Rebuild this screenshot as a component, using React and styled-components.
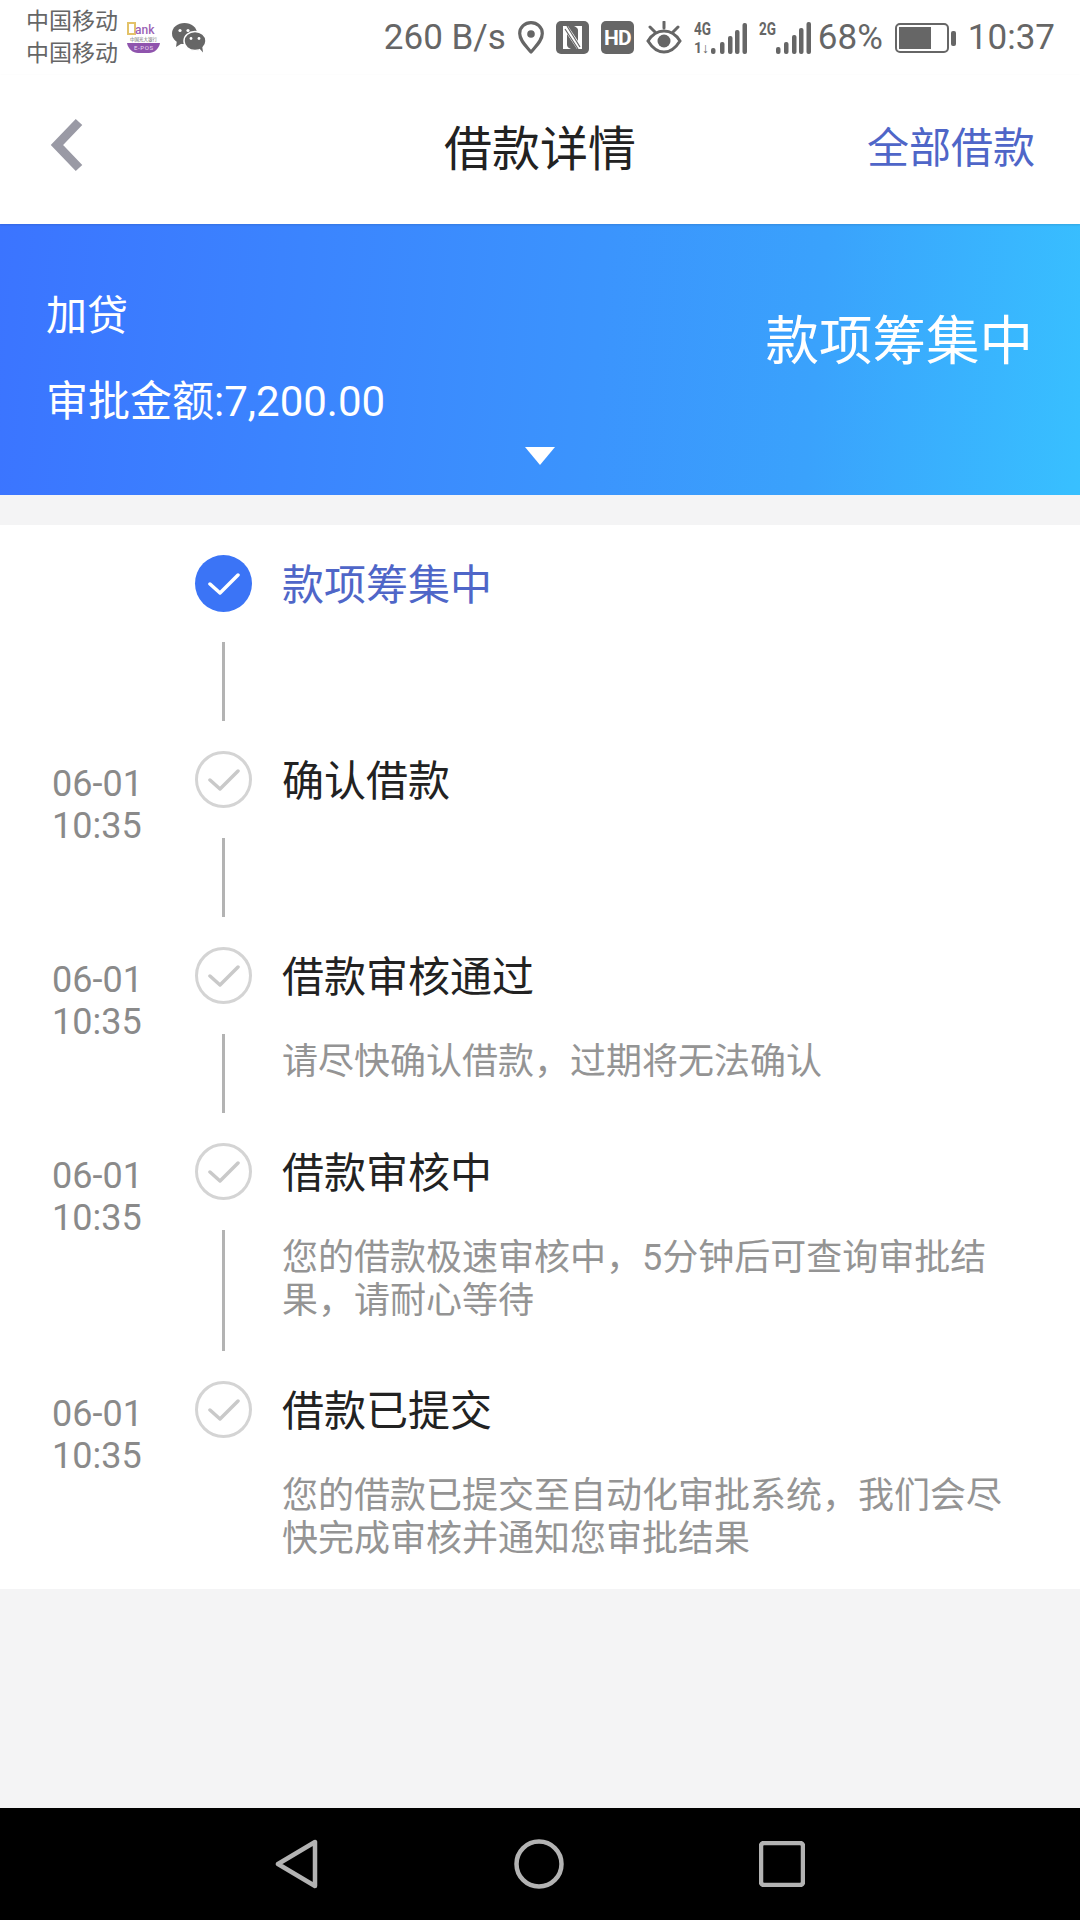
import React from "react";
import styled, {createGlobalStyle} from "styled-components";

const GlobalStyle = createGlobalStyle`
  html, body {
    margin: 0;
    padding: 0;
    background: #f4f4f5;
    font-family: Roboto, "Noto Sans CJK SC", sans-serif;
  }
  * {
    box-sizing: border-box;
  }
`

const Page = styled.div`
  display: flex;
  flex-direction: column;
  width: 1080px;
  height: 1920px;
  overflow: hidden;
`

const StatusBar = styled.div`
  display: flex;
  align-items: center;
  justify-content: space-between;
  height: 75px;
  padding: 0 25px 0 26px;
  background: #fff;
  color: #666;
`

const StatusLeft = styled.div`
  display: flex;
  align-items: center;
`

const Carriers = styled.div`
  font-size: 23px;
  line-height: 32px;
  width: 101px;
`

const StatusRight = styled.div`
  display: flex;
  align-items: center;
  gap: 12px;
`

const StatusText = styled.span`
  font-size: 35px;
  margin-left: ${props => props.$offset || 0}px;
  line-height: 40px;
`

const NavBar = styled.div`
  display: flex;
  align-items: center;
  justify-content: space-between;
  position: relative;
  height: 149px;
  padding: 0 45px 10px 49px;
  background: #fff;
  box-shadow: 0 1px 2px #00000020;
`

const NavTitle = styled.div`
  position: absolute;
  left: 0;
  right: 0;
  text-align: center;
  font-size: 48px;
  color: #222;
  pointer-events: none;
`

const NavLink = styled.div`
  font-size: 42px;
  color: #4f66c8;
`

const Banner = styled.div`
  display: flex;
  flex-direction: column;
  height: 271px;
  background: linear-gradient(95deg, #3b74ff 0%, #3b94fd 55%, #3aa2fc 75%, #38c0ff 100%);
  color: #fff;
`

const BannerMain = styled.div`
  display: flex;
  justify-content: space-between;
  align-items: center;
  height: 223px;
  padding: 46px 47px 0 46px;
`

const BannerInfo = styled.div`
  display: flex;
  flex-direction: column;
  gap: 34px;
`

const LoanType = styled.div`
  font-size: 41px;
  line-height: 52px;
`

const Amount = styled.div`
  font-size: 42px;
  line-height: 52px;
`

const BannerStatus = styled.div`
  font-size: 53.5px;
  margin-top: -44px;
`

const Caret = styled.div`
  align-self: center;
  width: 0;
  height: 0;
  border-left: 15px solid transparent;
  border-right: 15px solid transparent;
  border-top: 18px solid #fff;
`

const Timeline = styled.div`
  margin-top: 30px;
  padding: 30px 0 28px;
  background: #fff;
`

const Row = styled.div`
  display: grid;
  grid-template-columns: 195px 57px 1fr;
`

const Stamp = styled.div`
  padding: 12px 0 0 52px;
  font-size: 36px;
  line-height: 42px;
  color: #8a8a8a;
`

const Rail = styled.div`
  display: flex;
  flex-direction: column;
  align-items: center;
  gap: 30px;
  padding-bottom: ${props => props.$last ? 0 : 30}px;
`

const Dot = styled.div`
  display: flex;
  align-items: center;
  justify-content: center;
  width: 57px;
  height: 57px;
  border-radius: 50%;
  background: ${props => props.$active ? "#3b74f6" : "#fff"};
  border: ${props => props.$active ? "none" : "3px solid #d4d4d4"};
`

const RailLine = styled.div`
  width: 3px;
  height: ${props => props.$length}px;
  background: #b3b3b3;
`

const Body = styled.div`
  padding-left: 30px;
`

const StepTitle = styled.div`
  font-size: 42px;
  line-height: 57px;
  padding-top: 2px;
  color: ${props => props.$active ? "#4f66c8" : "#222"};
`

const StepNote = styled.div`
  width: 730px;
  margin-top: 35px;
  font-size: 36px;
  line-height: 43px;
  color: #949494;
`

const Spacer = styled.div`
  flex: 1;
  background: #f4f4f5;
`

const SoftKeys = styled.div`
  display: flex;
  align-items: center;
  justify-content: center;
  gap: 195px;
  height: 112px;
  background: #000;
`

const SignalSvg = styled.svg`
  margin-top: -6px;
`

const CheckIcon = ({color}) => (
    <svg width="32" height="26" viewBox="0 0 32 26">
        <path d="M2 13 L12 22 L30 4" fill="none" stroke={color} strokeWidth="3.5" strokeLinecap="round" strokeLinejoin="round"/>
    </svg>
)

const BankLogo = () => (
    <svg width="34" height="31" viewBox="0 0 34 31">
        <rect x="1" y="1" width="7" height="11" fill="none" stroke="#e3c268" strokeWidth="2"/>
        <text x="8" y="12" fontSize="12" fontWeight="500" fill="#9a62b5" fontFamily="Roboto">ank</text>
        <text x="3" y="19" fontSize="4.5" fill="#666" fontFamily="Noto Sans CJK SC">中国光大银行</text>
        <path d="M0 21 H33 C32 27 27 31 22 31 H11 C6 31 1 27 0 21 Z" fill="#8f54ad"/>
        <text x="7" y="27.5" fontSize="6" fill="#eadcf2" fontFamily="Roboto" letterSpacing="0.6">E-POS</text>
    </svg>
)

const WechatIcon = () => (
    <svg width="34" height="30" viewBox="0 0 34 30" style={{marginLeft: 11}}>
        <ellipse cx="12.5" cy="10.5" rx="12.5" ry="10.5" fill="#666"/>
        <path d="M5 17 L4 24 L12 19 Z" fill="#666"/>
        <ellipse cx="23" cy="18" rx="11" ry="9.5" fill="#666" stroke="#fff" strokeWidth="1.5"/>
        <path d="M27 25 L31 29.5 L30 22 Z" fill="#666"/>
        <circle cx="8" cy="7.5" r="1.6" fill="#fff"/>
        <circle cx="16" cy="7.5" r="1.6" fill="#fff"/>
        <circle cx="19" cy="15.5" r="1.4" fill="#fff"/>
        <circle cx="27" cy="15.5" r="1.4" fill="#fff"/>
    </svg>
)

const PinIcon = () => (
    <svg width="26" height="33" viewBox="0 0 26 33">
        <path d="M13 31 C8 25 1.7 19.5 1.7 12.5 C1.7 6 7 1.7 13 1.7 C19 1.7 24.3 6 24.3 12.5 C24.3 19.5 18 25 13 31 Z" fill="none" stroke="#666" strokeWidth="3.2" strokeLinejoin="round"/>
        <circle cx="13" cy="13" r="3.8" fill="#666"/>
    </svg>
)

const NfcIcon = () => (
    <svg width="33" height="33" viewBox="0 0 33 33">
        <rect width="33" height="33" rx="5" fill="#666"/>
        <path d="M7 5 H12 L22 20 V9 C22 7 20 6 18 5 H26 V28 H21 L11 13 V24 C11 26 13 27 15 28 H7 Z" fill="#fff"/>
        <path d="M11 5 L24 26 M9 8 L22 28" stroke="#666" strokeWidth="1.2" fill="none"/>
    </svg>
)

const HdBadge = styled.div`
  display: flex;
  align-items: center;
  justify-content: center;
  width: 33px;
  height: 33px;
  border-radius: 5px;
  background: #666;
  color: #fff;
  font-size: 21px;
  font-weight: 700;
  letter-spacing: -1px;
`

const EyeIcon = () => (
    <svg width="36" height="33" viewBox="0 0 36 33">
        <path d="M2 20 C7 12 12 10 18 10 C24 10 29 12 34 20 C29 28 24 31 18 31 C12 31 7 28 2 20 Z" fill="none" stroke="#666" strokeWidth="3"/>
        <circle cx="18" cy="20" r="6.5" fill="#666"/>
        <path d="M18 1 V7 M4 6 L9 11 M32 6 L27 11" stroke="#666" strokeWidth="3" strokeLinecap="round"/>
    </svg>
)

const SignalIcon = ({label, width, arrows, bars}) => (
    <SignalSvg width={width} height="40" viewBox={`0 -6 ${width} 40`}>
        <text x="0" y="14" fontSize="18" fontWeight="700" fill="#666" fontFamily="Roboto" textLength="17" lengthAdjust="spacingAndGlyphs">{label}</text>
        {arrows && <text x="0" y="32" fontSize="14" fontWeight="700" fill="#666" fontFamily="Roboto" textLength="15" lengthAdjust="spacingAndGlyphs">1↓</text>}
        {bars.map(([x, top]) => (
            <rect key={x} x={x} y={top} width="4.5" height={33 - top} rx="2" fill="#666"/>
        ))}
    </SignalSvg>
)

const BatteryIcon = () => (
    <svg width="61" height="30" viewBox="0 0 61 30">
        <rect x="1" y="1" width="52" height="28" rx="4" fill="none" stroke="#666" strokeWidth="2"/>
        <rect x="4" y="4" width="32" height="22" fill="#666"/>
        <rect x="56" y="8" width="5" height="15" rx="2" fill="#666"/>
    </svg>
)

const BackChevron = () => (
    <svg width="36" height="56" viewBox="0 0 36 56">
        <path d="M30 5 L8 28 L30 51" fill="none" stroke="#9a9aa5" strokeWidth="9"/>
    </svg>
)

const steps = [
    {title: "款项筹集中", active: true, length: 79},
    {time: ["06-01", "10:35"], title: "确认借款", length: 79},
    {time: ["06-01", "10:35"], title: "借款审核通过", note: "请尽快确认借款，过期将无法确认", length: 79},
    {time: ["06-01", "10:35"], title: "借款审核中", note: "您的借款极速审核中，5分钟后可查询审批结果，请耐心等待", length: 121},
    {time: ["06-01", "10:35"], title: "借款已提交", note: "您的借款已提交至自动化审批系统，我们会尽快完成审核并通知您审批结果"},
]

const Step = ({step}) => (
    <Row>
        <Stamp>
            {step.time && step.time.map(line => <div key={line}>{line}</div>)}
        </Stamp>
        <Rail $last={!step.length}>
            <Dot $active={step.active}>
                <CheckIcon color={step.active ? "#fff" : "#c9c9c9"}/>
            </Dot>
            {step.length && <RailLine $length={step.length}/>}
        </Rail>
        <Body>
            <StepTitle $active={step.active}>{step.title}</StepTitle>
            {step.note && <StepNote>{step.note}</StepNote>}
        </Body>
    </Row>
)

const App = () => (
    <Page>
        <GlobalStyle/>
        <StatusBar>
            <StatusLeft>
                <Carriers>
                    <div>中国移动</div>
                    <div>中国移动</div>
                </Carriers>
                <BankLogo/>
                <WechatIcon/>
            </StatusLeft>
            <StatusRight>
                <StatusText>260 B/s</StatusText>
                <PinIcon/>
                <NfcIcon/>
                <HdBadge>HD</HdBadge>
                <EyeIcon/>
                <SignalIcon label="4G" width={53} arrows bars={[[17, 27], [26, 21], [34, 15], [41, 9], [48.5, 2]]}/>
                <SignalIcon label="2G" width={52} bars={[[17, 26], [25, 21], [33, 14], [40, 7], [47.5, 1]]}/>
                <StatusText $offset={-5}>68%</StatusText>
                <BatteryIcon/>
                <StatusText>10:37</StatusText>
            </StatusRight>
        </StatusBar>
        <NavBar>
            <BackChevron/>
            <NavTitle>借款详情</NavTitle>
            <NavLink>全部借款</NavLink>
        </NavBar>
        <Banner>
            <BannerMain>
                <BannerInfo>
                    <LoanType>加贷</LoanType>
                    <Amount>审批金额:7,200.00</Amount>
                </BannerInfo>
                <BannerStatus>款项筹集中</BannerStatus>
            </BannerMain>
            <Caret/>
        </Banner>
        <Timeline>
            {steps.map(step => <Step key={step.title} step={step}/>)}
        </Timeline>
        <Spacer/>
        <SoftKeys>
            <svg width="44" height="50" viewBox="0 0 44 50">
                <path d="M40 3 V47 L3 25 Z" fill="none" stroke="#b3b3b3" strokeWidth="4.5" strokeLinejoin="round"/>
            </svg>
            <svg width="50" height="50" viewBox="0 0 50 50">
                <circle cx="25" cy="25" r="22.5" fill="none" stroke="#b3b3b3" strokeWidth="4.5"/>
            </svg>
            <svg width="46" height="46" viewBox="0 0 46 46">
                <rect x="2" y="2" width="42" height="42" rx="3" fill="none" stroke="#b3b3b3" strokeWidth="4.5"/>
            </svg>
        </SoftKeys>
    </Page>
)

export default App
